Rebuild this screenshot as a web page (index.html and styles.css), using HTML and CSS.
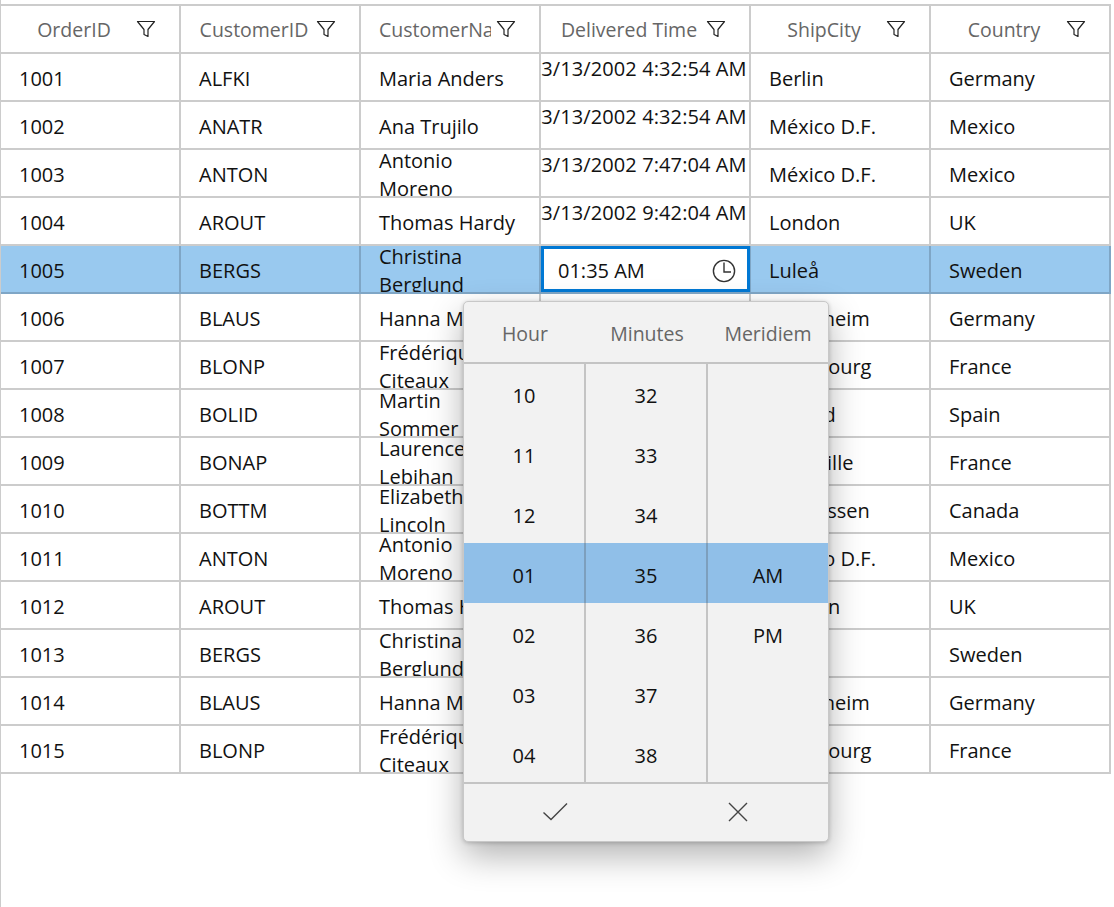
FILE: index.html
```html
<!DOCTYPE html>
<html lang="en">
<head>
    <meta charset="UTF-8">
    <meta name="viewport" content="width=device-width, initial-scale=1.0">
    <title>DataGrid time editor</title>
    <link rel="stylesheet" href="styles.css">
</head>
<body>
    <svg class="defs">
        <symbol id="filter" viewBox="0 0 20 20"><path d="M1.5 2.5h17l-6.5 8v7l-4-2v-5z" fill="none" stroke="#222" stroke-width="1.2" stroke-linejoin="round"/></symbol>
    </svg>
    <div id="wrapper">
        <div class="grid">
            <!-- header -->
            <div class="head"><span class="title">OrderID</span><svg class="ico"><use href="#filter"/></svg></div>
            <div class="head"><span class="title">CustomerID</span><svg class="ico"><use href="#filter"/></svg></div>
            <div class="head"><span class="title clip">CustomerName</span><svg class="ico"><use href="#filter"/></svg></div>
            <div class="head"><span class="title">Delivered Time</span><svg class="ico"><use href="#filter"/></svg></div>
            <div class="head"><span class="title">ShipCity</span><svg class="ico"><use href="#filter"/></svg></div>
            <div class="head"><span class="title">Country</span><svg class="ico"><use href="#filter"/></svg></div>

            <div class="cell">1001</div><div class="cell">ALFKI</div><div class="cell">Maria Anders</div><div class="cell time">3/13/2002 4:32:54 AM</div><div class="cell">Berlin</div><div class="cell">Germany</div>
            <div class="cell">1002</div><div class="cell">ANATR</div><div class="cell">Ana Trujilo</div><div class="cell time">3/13/2002 4:32:54 AM</div><div class="cell">México D.F.</div><div class="cell">Mexico</div>
            <div class="cell">1003</div><div class="cell">ANTON</div><div class="cell">Antonio<br>Moreno</div><div class="cell time">3/13/2002 7:47:04 AM</div><div class="cell">México D.F.</div><div class="cell">Mexico</div>
            <div class="cell">1004</div><div class="cell">AROUT</div><div class="cell">Thomas Hardy</div><div class="cell time">3/13/2002 9:42:04 AM</div><div class="cell">London</div><div class="cell">UK</div>

            <!-- selected row -->
            <div class="cell sel">1005</div><div class="cell sel">BERGS</div><div class="cell sel">Christina<br>Berglund</div>
            <div class="cell sel editcell">
                <div class="editor">
                    <span>01:35 AM</span>
                    <svg class="clock" viewBox="0 0 24 24"><circle cx="12" cy="12" r="10.6" fill="none" stroke="#333" stroke-width="1.4"/><path d="M12 3.5V13H19" fill="none" stroke="#333" stroke-width="1.4"/></svg>
                </div>
            </div>
            <div class="cell sel">Luleå</div><div class="cell sel">Sweden</div>

            <div class="cell">1006</div><div class="cell">BLAUS</div><div class="cell">Hanna Moos</div><div class="cell time">3/13/2002 4:32:54 AM</div><div class="cell">Mannheim</div><div class="cell">Germany</div>
            <div class="cell">1007</div><div class="cell">BLONP</div><div class="cell">Frédérique<br>Citeaux</div><div class="cell time">3/13/2002 4:32:54 AM</div><div class="cell">Strasbourg</div><div class="cell">France</div>
            <div class="cell">1008</div><div class="cell">BOLID</div><div class="cell">Martin<br>Sommer</div><div class="cell time">3/13/2002 7:47:04 AM</div><div class="cell">Madrid</div><div class="cell">Spain</div>
            <div class="cell">1009</div><div class="cell">BONAP</div><div class="cell">Laurence<br>Lebihan</div><div class="cell time">3/13/2002 9:42:04 AM</div><div class="cell">Marseille</div><div class="cell">France</div>
            <div class="cell">1010</div><div class="cell">BOTTM</div><div class="cell">Elizabeth<br>Lincoln</div><div class="cell time">3/13/2002 4:32:54 AM</div><div class="cell">Tsawassen</div><div class="cell">Canada</div>
            <div class="cell">1011</div><div class="cell">ANTON</div><div class="cell">Antonio<br>Moreno</div><div class="cell time">3/13/2002 7:47:04 AM</div><div class="cell">México D.F.</div><div class="cell">Mexico</div>
            <div class="cell">1012</div><div class="cell">AROUT</div><div class="cell">Thomas Hardy</div><div class="cell time">3/13/2002 9:42:04 AM</div><div class="cell">London</div><div class="cell">UK</div>
            <div class="cell">1013</div><div class="cell">BERGS</div><div class="cell">Christina<br>Berglund</div><div class="cell time">3/13/2002 4:32:54 AM</div><div class="cell">Luleå</div><div class="cell">Sweden</div>
            <div class="cell">1014</div><div class="cell">BLAUS</div><div class="cell">Hanna Moos</div><div class="cell time">3/13/2002 4:32:54 AM</div><div class="cell">Mannheim</div><div class="cell">Germany</div>
            <div class="cell">1015</div><div class="cell">BLONP</div><div class="cell">Frédérique<br>Citeaux</div><div class="cell time">3/13/2002 7:47:04 AM</div><div class="cell">Strasbourg</div><div class="cell">France</div>
        </div>

        <!-- time picker popup -->
        <div id="picker">
            <div class="p-head"><div>Hour</div><div>Minutes</div><div>Meridiem</div></div>
            <div class="p-body">
                <div class="p-col">
                    <div class="p-item">10</div><div class="p-item">11</div><div class="p-item">12</div><div class="p-item on">01</div><div class="p-item">02</div><div class="p-item">03</div><div class="p-item">04</div>
                </div>
                <div class="p-col">
                    <div class="p-item">32</div><div class="p-item">33</div><div class="p-item">34</div><div class="p-item on">35</div><div class="p-item">36</div><div class="p-item">37</div><div class="p-item">38</div>
                </div>
                <div class="p-col">
                    <div class="p-item"></div><div class="p-item"></div><div class="p-item"></div><div class="p-item on">AM</div><div class="p-item">PM</div><div class="p-item"></div><div class="p-item"></div>
                </div>
            </div>
            <div class="p-foot">
                <svg class="p-btn" viewBox="0 0 26 20"><path d="M1.5 10.5l7.5 7L25 1.5" fill="none" stroke="#444" stroke-width="1.4"/></svg>
                <svg class="p-btn p-cancel" viewBox="0 0 26 20"><path d="M4 1l18 18M22 1L4 19" fill="none" stroke="#444" stroke-width="1.4"/></svg>
            </div>
        </div>
    </div>
</body>
</html>
```

FILE: styles.css
```css
html, body{
    margin: 0;
    height: 100%;
    background-color: #ffffff;
}
body{
    font-family: "Open Sans", "Liberation Sans", sans-serif;
    font-size: 20px;
    color: #111111;
}
.defs{
    display: none;
}
#wrapper{
    position: relative;
    width: 1114px;
    height: 907px;
    overflow: hidden;
    box-sizing: border-box;
    padding-top: 4px;
    border-left: 2px solid #cccccc;
    margin-left: -1px;
}
.grid{
    display: grid;
    grid-template-columns: 180px 180px 180px 210px 180px 180px;
    grid-auto-rows: 48px;
    width: 1110px;
    border-top: 2px solid #cccccc;
    box-sizing: border-box;
}
.head, .cell{
    box-sizing: border-box;
    border-right: 2px solid #cccccc;
    border-bottom: 2px solid #cccccc;
    overflow: hidden;
}
.head{
    display: flex;
    align-items: center;
    padding-left: 16px;
    padding-right: 18px;
    color: #666666;
    font-size: 19.5px;
}
.title{
    flex: 1;
    min-width: 0;
    text-align: center;
    white-space: nowrap;
    overflow: hidden;
}
.title.clip{
    text-align: left;
    padding-left: 2px;
}
.ico{
    width: 20px;
    height: 20px;
    margin-left: 5px;
    margin-right: 5px;
    margin-top: -1px;
    flex: none;
}
.cell{
    display: flex;
    align-items: center;
    padding-left: 18px;
    padding-top: 3px;
    line-height: 28px;
}
.time{
    align-items: flex-start;
    justify-content: center;
    padding: 1px 2px 0 0;
    letter-spacing: 0.1px;
    white-space: nowrap;
}
.sel{
    background-color: #99c9ef;
    border-right-color: #7fa6c6;
    border-bottom-color: #7fa6c6;
}
.editcell{
    padding: 0;
    overflow: visible;
}
.editor{
    flex: 1;
    align-self: stretch;
    display: flex;
    align-items: center;
    justify-content: space-between;
    margin-right: -1px;
    background-color: #ffffff;
    border: 3px solid #0078d4;
    padding: 4px 11px 0 14px;
}
.clock{
    width: 24px;
    height: 24px;
}
#picker{
    position: absolute;
    left: 462px;
    top: 301px;
    width: 366px;
    height: 541px;
    box-sizing: border-box;
    background-color: #f2f2f2;
    border: 1px solid #c8c8c8;
    border-radius: 5px;
    box-shadow: 0 14px 34px rgba(0, 0, 0, 0.3), 0 1px 4px rgba(0, 0, 0, 0.2);
    display: flex;
    flex-direction: column;
    overflow: hidden;
}
.p-head{
    display: grid;
    grid-template-columns: 122px 122px 1fr;
    height: 62px;
    flex: none;
    align-items: center;
    text-align: center;
    color: #666666;
    font-size: 19.5px;
    padding-top: 3px;
    border-bottom: 2px solid #c4c4c4;
    box-sizing: border-box;
}
.p-body{
    display: grid;
    grid-template-columns: 122px 122px 1fr;
    flex: 1;
    min-height: 0;
    overflow: hidden;
}
.p-col{
    border-right: 2px solid #c4c4c4;
}
.p-col:last-child{
    border-right: 0;
}
.p-item{
    height: 60px;
    box-sizing: border-box;
    padding-top: 5px;
    display: flex;
    align-items: center;
    justify-content: center;
}
.p-item:first-child{
    margin-top: -1px;
}
.p-item.on{
    background-color: #90bfe8;
    margin-right: -2px;
    border-right: 2px solid #7d9fbd;
}
.p-col:last-child .p-item.on{
    margin-right: 0;
    border-right: 0;
}
.p-foot{
    flex: none;
    height: 59px;
    border-top: 2px solid #c4c4c4;
    box-sizing: border-box;
    display: flex;
    align-items: center;
    justify-content: space-around;
    padding: 0 0 2px;
}
.p-btn{
    width: 26px;
    height: 20px;
}
.p-cancel{
    margin-left: 2px;
}
```
